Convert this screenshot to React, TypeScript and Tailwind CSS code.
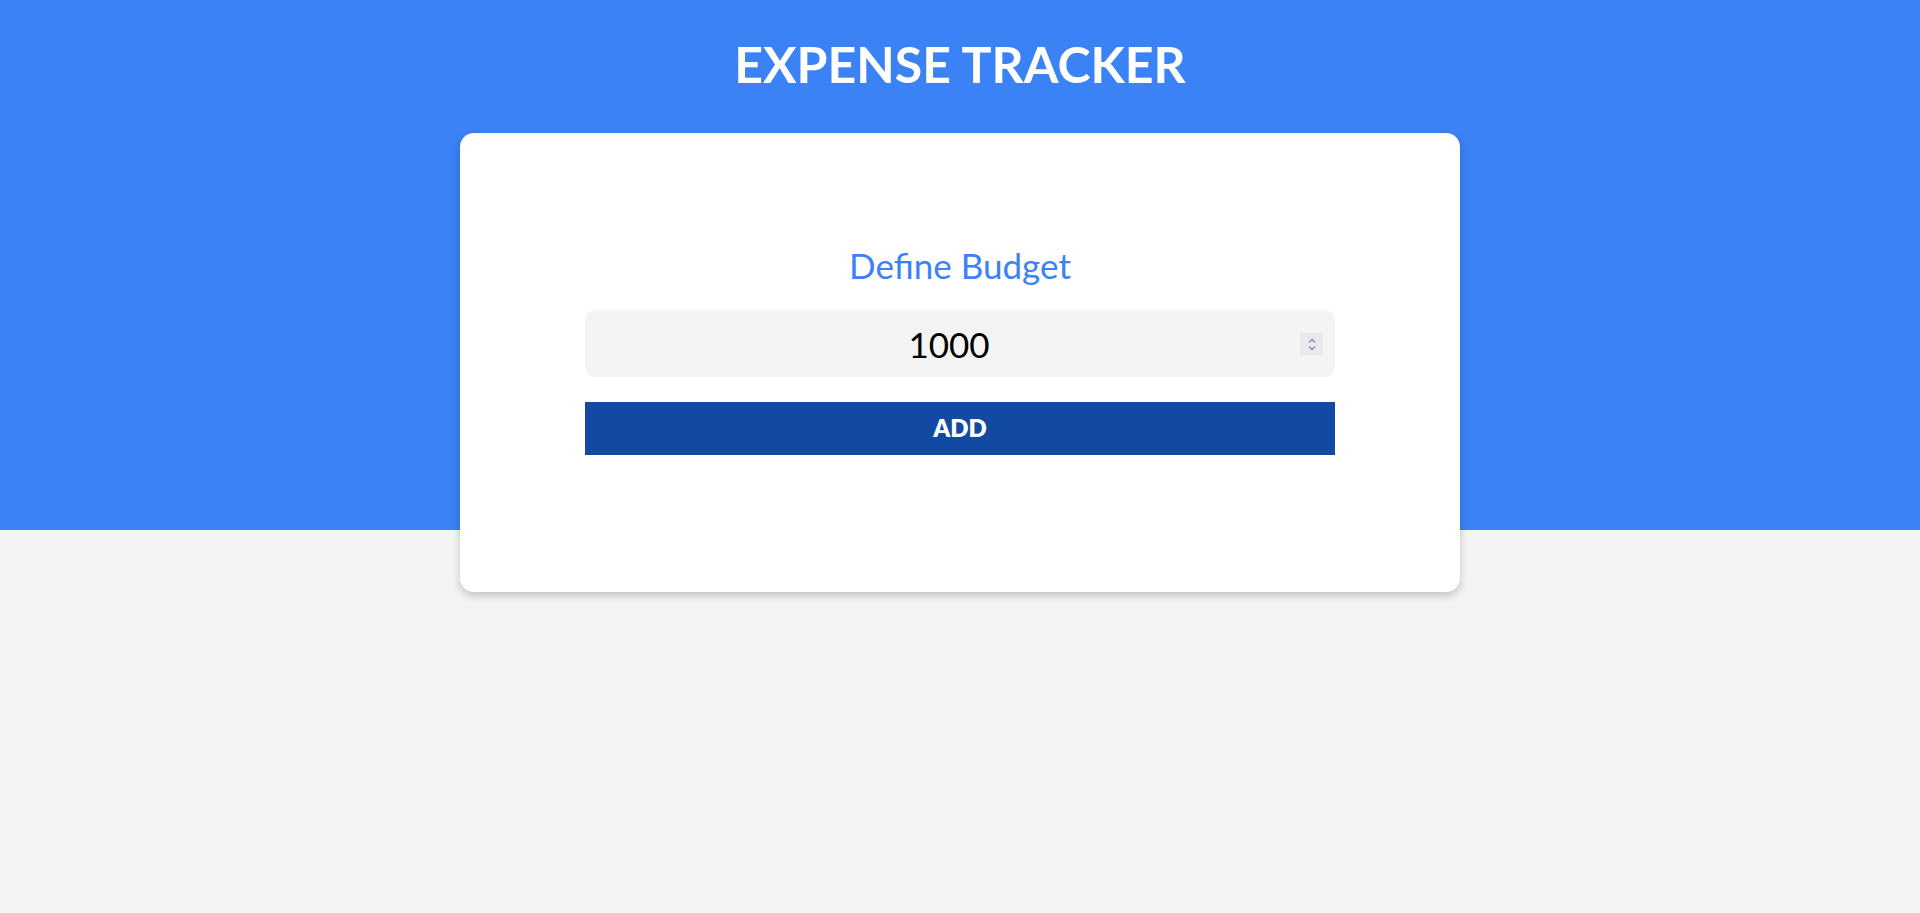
export default function App() {
  return (
    <div
      className="min-h-screen w-full bg-[linear-gradient(to_bottom,#3b82f6_530px,#f4f4f4_530px)] flex flex-col items-center"
      style={{ fontFamily: "Lato, 'Open Sans', sans-serif" }}
    >
      <h1 className="pt-[34px] text-[50px] leading-[1.2] font-bold text-white">EXPENSE TRACKER</h1>

      {/* Budget card */}
      <div className="mt-[39px] w-[1000px] bg-white rounded-[14px] shadow-[0_4px_8px_rgba(0,0,0,0.2)] pt-[111px] pb-[137px] flex flex-col items-center">
        <h2 className="text-[35px] leading-[1.2] text-[#3b82f6]">Define Budget</h2>
        <div className="relative mt-[24px] w-[750px]">
          <input
            type="text"
            readOnly
            value="1000"
            className="w-full h-[67px] rounded-[10px] bg-[#f4f4f4] pr-[22px] text-center text-[35px] leading-[1.2] text-black outline-none"
          />
          <div className="absolute right-[12px] top-[23px] w-[23px] h-[22px] bg-[#e9e9ed] flex flex-col items-center justify-center gap-[1px]">
            <svg width="8" height="6" viewBox="0 0 8 6" fill="none" stroke="#8e8a96" strokeWidth="1.3">
              <path d="M1 4.5L4 1.5L7 4.5" />
            </svg>
            <svg width="8" height="6" viewBox="0 0 8 6" fill="none" stroke="#8e8a96" strokeWidth="1.3">
              <path d="M1 1.5L4 4.5L7 1.5" />
            </svg>
          </div>
        </div>
        <button className="mt-[25px] w-[750px] h-[53px] bg-[#1249a3] text-white text-[24px] leading-[1.2] font-extrabold">
          ADD
        </button>
      </div>
    </div>
  );
}
